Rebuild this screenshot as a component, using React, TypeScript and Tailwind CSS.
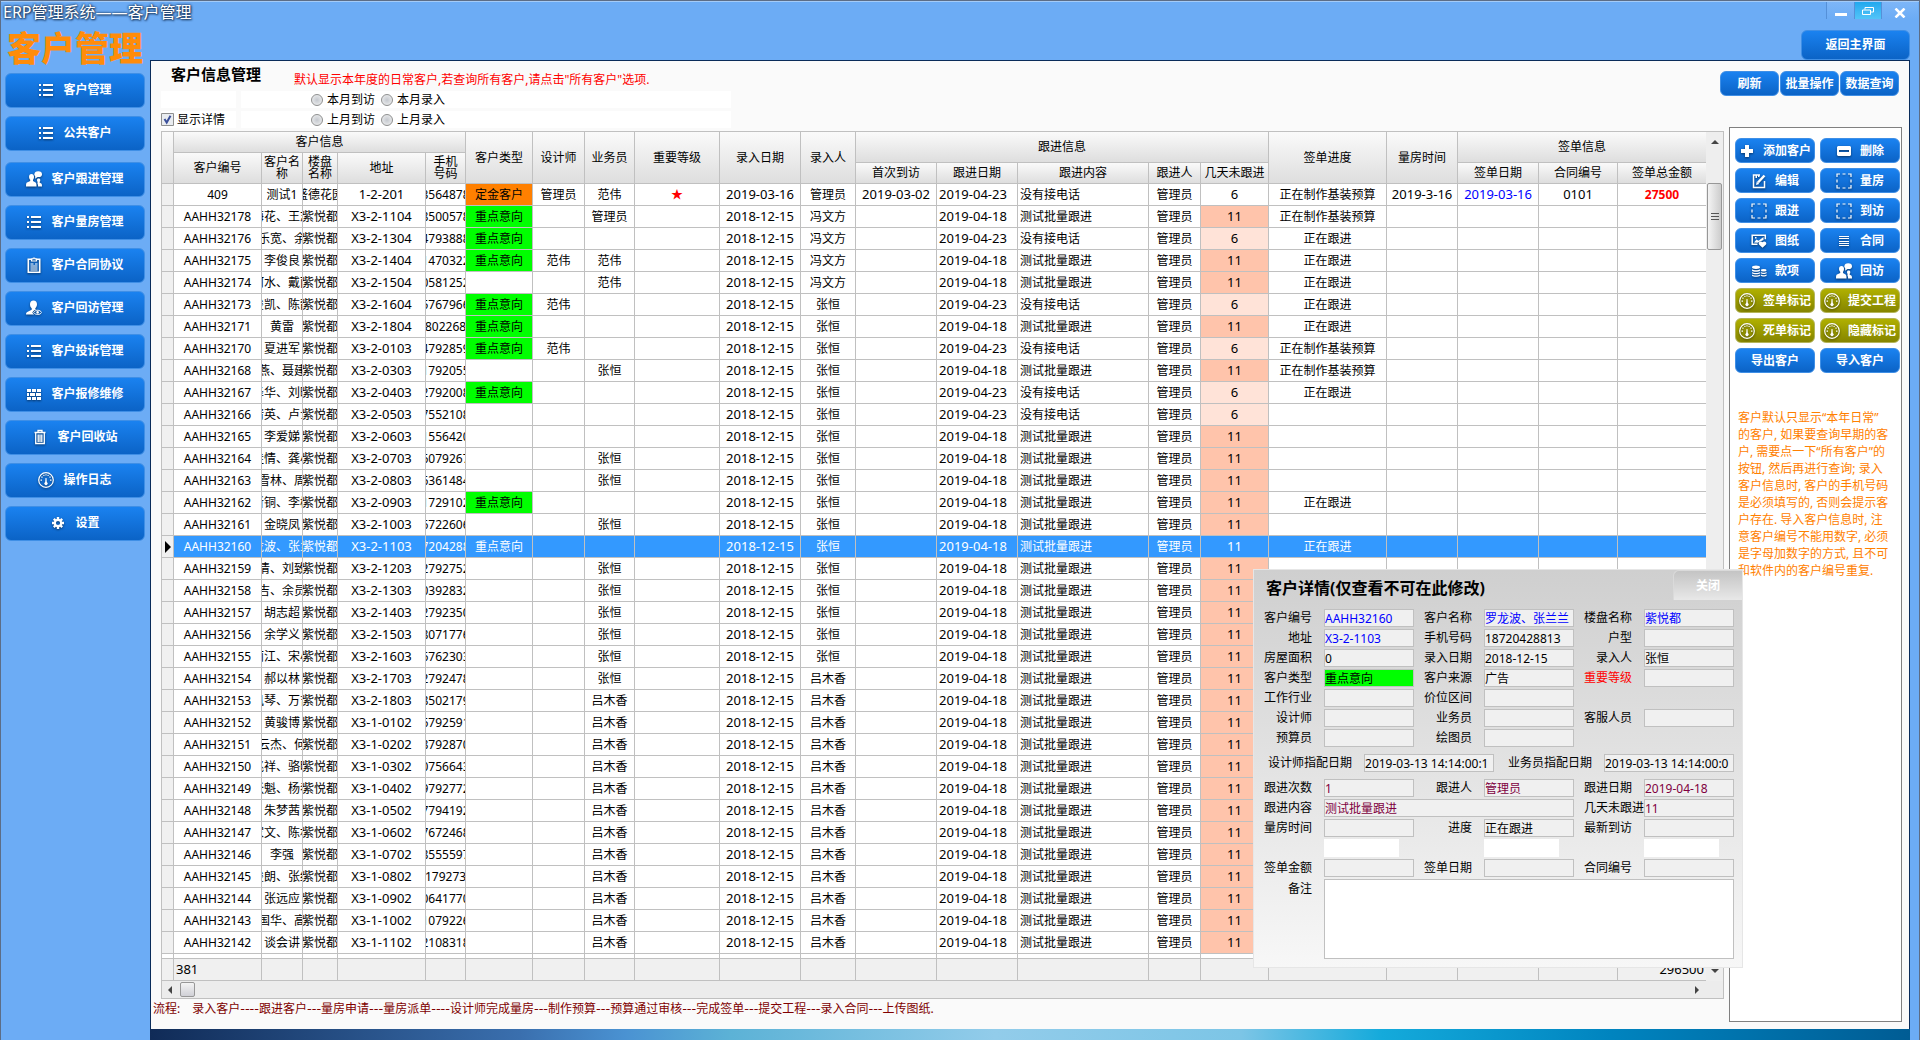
import type { ReactNode } from "react";

type IconName =
  | "list"
  | "people"
  | "clipboard"
  | "userEye"
  | "bricks"
  | "trash"
  | "gauge"
  | "gear"
  | "plus"
  | "minus"
  | "edit"
  | "dashed"
  | "image"
  | "lines"
  | "coins";

const icons: Record<IconName, ReactNode> = {
  list: (
    <path
      fill="currentColor"
      d="M1 2h2v2H1zM5 2h10v2H5zM1 7h2v2H1zM5 7h10v2H5zM1 12h2v2H1zM5 12h10v2H5z"
    />
  ),
  people: (
    <g fill="currentColor">
      <path d="M5.500 3C3.800 3 3 4.200 3 5.800c0 1.300.500 2.300 1.200 2.900v1.400L1 11.600C.400 12 0 12.600 0 15.500h10.500c0-2.900-.400-3.500-1-3.900L7 10.100V8.700C7.600 8.100 8 7.100 8 5.800 8 4.200 7.200 3 5.500 3z" />
      <ellipse cx="12.200" cy="3.200" rx="3.800" ry="2.900" />
      <path d="M9.500 4.500 9 7.800l3-2zM12.500 7.500c-1 0-1.500.700-1.500 1.700 0 .800.300 1.400.700 1.700v.700c-.500.200-.500.500-.200.900.500.800.600 2 .6 3H16c0-2.200-.300-2.800-.800-3.100l-1.600-.9v-.600c.400-.300.700-.900.700-1.700 0-1-.600-1.700-1.800-1.700z" />
    </g>
  ),
  clipboard: (
    <g fill="none" stroke="currentColor">
      <path strokeWidth="1.600" d="M5 2.300H2.300v13h11.400v-13H11" />
      <path strokeWidth="1.200" d="M5.500 4V1.800h1.400C7 .900 9 .900 9.100 1.800h1.400V4zM4.500 7h3M9 7h2.500M4.500 9h7M4.500 11h7M4.500 13h7" />
    </g>
  ),
  userEye: (
    <g fill="currentColor">
      <path d="M7.500.500C5.300.500 4 2.100 4 4.300c0 1.800.700 3.200 1.700 4v1.500l-4 2C.500 12.400 0 13.200 0 14.500h8c-1-1-1.500-1.700-1.700-2 .900-1.700 2.300-2.800 4.200-3.100l-1.200-.500v-.700c1-.800 1.700-2.200 1.700-3.900 0-2.200-1.300-3.800-3.500-3.800z" />
      <path fill="none" stroke="currentColor" d="M7.600 12.500c2-3 6.200-3 8.100 0-1.900 2.700-6.100 2.700-8.100 0z" />
      <circle cx="11.600" cy="12.400" r="1.300" />
    </g>
  ),
  bricks: (
    <path
      fill="currentColor"
      d="M1 3h4v3H1zM6 3h4v3H6zM11 3h4v3h-4zM1 7h2v3H1zM4 7h5v3H4zM10 7h5v3h-5zM1 11h4v3H1zM6 11h4v3H6zM11 11h4v3h-4z"
    />
  ),
  trash: (
    <g fill="none" stroke="currentColor" strokeWidth="1.300">
      <path d="M2.500 3.500h11M6 3.300V1.500h4v1.800M3.700 3.500v11h8.600v-11M6.200 5.500v7.500M8 5.500v7.500M9.800 5.500v7.500" />
    </g>
  ),
  gauge: (
    <g>
      <circle cx="8" cy="8" r="7.300" fill="none" stroke="currentColor" strokeWidth="1.200" />
      <path
        fill="currentColor"
        d="M2.500 7.500h1.500v1.200H2.500zM3.300 4.500h1.300v1.300H3.300zM5.300 2.800h1.200v1.200H5.300zM7.400 2.200h1.200v1.300H7.400zM9.500 2.800h1.200v1.200H9.500zM11.400 4.500h1.300v1.300h-1.300zM12 7.500h1.500v1.200H12z"
      />
      <path fill="currentColor" d="M7.500 6h1l.300 4a1.700 1.700 0 1 1-1.600 0z" />
    </g>
  ),
  gear: (
    <g fill="none" stroke="currentColor">
      <circle cx="8" cy="8" r="3.200" strokeWidth="2.200" />
      <path
        strokeWidth="2.400"
        d="M8 2v2.200M8 11.800V14M2 8h2.200M11.800 8H14M3.800 3.800l1.500 1.500M10.700 10.700l1.500 1.500M3.800 12.200l1.500-1.500M10.700 5.300l1.500-1.500"
      />
    </g>
  ),
  plus: <path fill="currentColor" d="M6 2h4v4h4v4h-4v4H6v-4H2V6h4z" />,
  minus: (
    <path fill="currentColor" fillRule="evenodd" d="M2 3h12l1 1v8l-1 1H2l-1-1V4zM3 7v2h10V7z" />
  ),
  edit: (
    <g fill="none" stroke="currentColor">
      <path strokeWidth="1.500" d="M9 2H2.500v12.500h11V8" />
      <path strokeWidth="2.500" d="M13.500 2.500 7 9.500" />
      <path fill="currentColor" stroke="none" d="m5 12 .8-3.500L8.300 11zM4.500 2h1.500v3H4.500zM7 2h1.500v2H7z" />
    </g>
  ),
  dashed: (
    <path
      fill="none"
      stroke="currentColor"
      strokeWidth="1.200"
      d="M1 4V1h3M6.500 1h3M12 1h3v3M15 6.500v3M15 12v3h-3M9.500 15h-3M4 15H1v-3M1 9.500v-3"
    />
  ),
  image: (
    <g>
      <path fill="none" stroke="currentColor" strokeWidth="1.500" d="M6.500 11.300H1.200V2.200h13.100v4" />
      <path fill="currentColor" d="m3 9.500 2.500-3 2 1.200L12.500 4v3L9 8.500 6.500 9.800zM4 4h1.500v1.500H4z" />
      <path fill="currentColor" d="M11.500 14.700 8 11.500C6.800 9.500 9.500 7.300 11.500 9.200c2-1.900 4.700.300 3.500 2.300z" />
    </g>
  ),
  lines: <path fill="currentColor" d="M3 3h10v1H3zM3 5h10v1H3zM3 8h10v1H3zM3 10h10v1H3zM3 12h10v1H3z" />,
  coins: (
    <g fill="currentColor">
      <ellipse cx="5" cy="4.200" rx="4" ry="1.700" />
      <path d="M1 6.200c1.500 1.300 6.500 1.300 8 0v1.500c-1.500 1.300-6.500 1.300-8 0zM1 8.900c1.500 1.300 6.500 1.300 8 0v1.300c-1.500 1.300-6.500 1.300-8 0zM1 11.500c1.500 1.300 6.500 1.300 8 0v1.300c-1.500 1.300-6.500 1.300-8 0z" />
      <ellipse cx="12.700" cy="7.200" rx="2.900" ry="1.200" />
      <path d="M9.800 9c1.200.9 4.600.9 5.800 0v1.200c-1.200.9-4.600.9-5.800 0zM9.800 11.500c1.200.9 4.600.9 5.800 0v1.300c-1.200.9-4.600.9-5.800 0z" />
    </g>
  ),
};

function Icon({ name }: { name: IconName }) {
  return (
    <svg viewBox="0 0 16 16" className="h-4 w-4 shrink-0 drop-shadow-[0_1px_1px_rgba(0,0,0,0.5)]" aria-hidden="true">
      {icons[name]}
    </svg>
  );
}

const blueBtn =
  "flex items-center justify-center rounded-md border border-[#3f8fe6] bg-linear-to-b from-[#1a82f0] to-[#0b63c6] text-xs font-bold text-white whitespace-nowrap";
const oliveBtn =
  "flex items-center justify-center rounded-md border border-[#b4b45a] bg-linear-to-b from-[#b0b000] to-[#858500] text-xs font-bold text-white whitespace-nowrap";

const menu: { label: string; icon: IconName }[] = [
  { label: "客户管理", icon: "list" },
  { label: "公共客户", icon: "list" },
  { label: "客户跟进管理", icon: "people" },
  { label: "客户量房管理", icon: "list" },
  { label: "客户合同协议", icon: "clipboard" },
  { label: "客户回访管理", icon: "userEye" },
  { label: "客户投诉管理", icon: "list" },
  { label: "客户报修维修", icon: "bricks" },
  { label: "客户回收站", icon: "trash" },
  { label: "操作日志", icon: "gauge" },
  { label: "设置", icon: "gear" },
];

const actions: { label: string; icon?: IconName; olive?: boolean }[] = [
  { label: "添加客户", icon: "plus" },
  { label: "删除", icon: "minus" },
  { label: "编辑", icon: "edit" },
  { label: "量房", icon: "dashed" },
  { label: "跟进", icon: "dashed" },
  { label: "到访", icon: "dashed" },
  { label: "图纸", icon: "image" },
  { label: "合同", icon: "lines" },
  { label: "款项", icon: "coins" },
  { label: "回访", icon: "people" },
  { label: "签单标记", icon: "gauge", olive: true },
  { label: "提交工程", icon: "gauge", olive: true },
  { label: "死单标记", icon: "gauge", olive: true },
  { label: "隐藏标记", icon: "gauge", olive: true },
  { label: "导出客户" },
  { label: "导入客户" },
];

const notes = [
  "客户默认只显示“本年日常”",
  "的客户, 如果要查询早期的客",
  "户, 需要点一下“所有客户”的",
  "按钮, 然后再进行查询; 录入",
  "客户信息时, 客户的手机号码",
  "是必须填写的, 否则会提示客",
  "户存在. 导入客户信息时, 注",
  "意客户编号不能用数字, 必须",
  "是字母加数字的方式, 且不可",
  "和软件内的客户编号重复.",
];

// each step with the dashes that lead to the next one
const steps: [string, string][] = [
  ["录入客户", "----"],
  ["跟进客户", "---"],
  ["量房申请", "---"],
  ["量房派单", "----"],
  ["设计师完成量房", "---"],
  ["制作预算", "---"],
  ["预算通过审核", "---"],
  ["完成签单", "---"],
  ["提交工程", "---"],
  ["录入合同", "---"],
  ["上传图纸.", ""],
];

type Row = {
  id: string;
  name: string;
  estate?: string;
  addr: string;
  phone: string;
  type?: string;
  designer?: string;
  sales?: string;
  star?: boolean;
  entered?: string;
  by: string;
  firstVisit?: string;
  days: 6 | 11;
  progress?: string;
  measured?: string;
  signed?: string;
  contract?: string;
  amount?: string;
};

const KEY = "重点意向";
const FOLLOW = "正在跟进";
const BUDGET = "正在制作基装预算";

const rows: Row[] = [
  {
    id: "409",
    name: "测试1",
    estate: "盛德花园",
    addr: "1-2-201",
    phone: "13356487801",
    type: "定金客户",
    designer: "管理员",
    sales: "范伟",
    star: true,
    entered: "2019-03-16",
    by: "管理员",
    firstVisit: "2019-03-02",
    days: 6,
    progress: BUDGET,
    measured: "2019-3-16",
    signed: "2019-03-16",
    contract: "0101",
    amount: "27500",
  },
  { id: "AAHH32178", name: "陈梅花、王志强", addr: "X3-2-1104", phone: "13850057821", type: KEY, sales: "管理员", by: "冯文方", days: 11, progress: BUDGET },
  { id: "AAHH32176", name: "李乐宽、余平", addr: "X3-2-1304", phone: "13479388812", type: KEY, by: "冯文方", days: 6, progress: FOLLOW },
  { id: "AAHH32175", name: "李俊良", addr: "X3-2-1404", phone: "15147032215", type: KEY, designer: "范伟", sales: "范伟", by: "冯文方", days: 11, progress: FOLLOW },
  { id: "AAHH32174", name: "周河水、戴丽华", addr: "X3-2-1504", phone: "13058125233", sales: "范伟", by: "冯文方", days: 11, progress: FOLLOW },
  { id: "AAHH32173", name: "张俊凯、陈静文", addr: "X3-2-1604", phone: "13576796616", type: KEY, designer: "范伟", by: "张恒", days: 6, progress: FOLLOW },
  { id: "AAHH32171", name: "黄雷", addr: "X3-2-1804", phone: "1380226801", type: KEY, by: "张恒", days: 11, progress: FOLLOW },
  { id: "AAHH32170", name: "夏进军", addr: "X3-2-0103", phone: "13479285912", type: KEY, designer: "范伟", by: "张恒", days: 6, progress: BUDGET },
  { id: "AAHH32168", name: "王燕、聂建国", addr: "X3-2-0303", phone: "15179205516", sales: "张恒", by: "张恒", days: 11, progress: BUDGET },
  { id: "AAHH32167", name: "李泽华、刘晓明", addr: "X3-2-0403", phone: "18279200810", type: KEY, by: "张恒", days: 6, progress: FOLLOW },
  { id: "AAHH32166", name: "陈倩英、卢士元", addr: "X3-2-0503", phone: "13755210812", by: "张恒", days: 6 },
  { id: "AAHH32165", name: "李爱娣", addr: "X3-2-0603", phone: "15155642011", by: "张恒", days: 11 },
  { id: "AAHH32164", name: "李佳情、龚小平", addr: "X3-2-0703", phone: "13607926712", sales: "张恒", by: "张恒", days: 11 },
  { id: "AAHH32163", name: "王雪林、周杰", addr: "X3-2-0803", phone: "13636148412", sales: "张恒", by: "张恒", days: 11 },
  { id: "AAHH32162", name: "王新铜、李梅花", addr: "X3-2-0903", phone: "15172910212", type: KEY, by: "张恒", days: 11, progress: FOLLOW },
  { id: "AAHH32161", name: "金晓凤", addr: "X3-2-1003", phone: "13672260612", sales: "张恒", by: "张恒", days: 11 },
  { id: "AAHH32160", name: "罗龙波、张兰兰", addr: "X3-2-1103", phone: "18720428813", type: KEY, by: "张恒", days: 11, progress: FOLLOW },
  { id: "AAHH32159", name: "王清、刘致远", addr: "X3-2-1203", phone: "18279275212", sales: "张恒", by: "张恒", days: 11 },
  { id: "AAHH32158", name: "李吉、余员生", addr: "X3-2-1303", phone: "13039283212", sales: "张恒", by: "张恒", days: 11 },
  { id: "AAHH32157", name: "胡志超", addr: "X3-2-1403", phone: "18279235012", sales: "张恒", by: "张恒", days: 11 },
  { id: "AAHH32156", name: "余学义", addr: "X3-2-1503", phone: "13807177612", sales: "张恒", by: "张恒", days: 11 },
  { id: "AAHH32155", name: "王丽江、宋小明", addr: "X3-2-1603", phone: "13676230312", sales: "张恒", by: "张恒", days: 11 },
  { id: "AAHH32154", name: "郝以林", addr: "X3-2-1703", phone: "18279247812", sales: "张恒", by: "吕木香", days: 11 },
  { id: "AAHH32153", name: "李凤琴、万吉平", addr: "X3-2-1803", phone: "13850217912", sales: "吕木香", by: "吕木香", days: 11 },
  { id: "AAHH32152", name: "黄骏博", addr: "X3-1-0102", phone: "13679259112", sales: "吕木香", by: "吕木香", days: 11 },
  { id: "AAHH32151", name: "张云杰、何平", addr: "X3-1-0202", phone: "13879287012", sales: "吕木香", by: "吕木香", days: 11 },
  { id: "AAHH32150", name: "李兆祥、骆明华", addr: "X3-1-0302", phone: "13075664312", sales: "吕木香", by: "吕木香", days: 11 },
  { id: "AAHH32149", name: "李跃魁、杨春梅", addr: "X3-1-0402", phone: "13979277212", sales: "吕木香", by: "吕木香", days: 11 },
  { id: "AAHH32148", name: "朱梦茜", addr: "X3-1-0502", phone: "13779419212", sales: "吕木香", by: "吕木香", days: 11 },
  { id: "AAHH32147", name: "李家文、陈林英", addr: "X3-1-0602", phone: "13767246812", sales: "吕木香", by: "吕木香", days: 11 },
  { id: "AAHH32146", name: "李强", addr: "X3-1-0702", phone: "13855559712", sales: "吕木香", by: "吕木香", days: 11 },
  { id: "AAHH32145", name: "王俊朗、张红梅", addr: "X3-1-0802", phone: "1317927312", sales: "吕木香", by: "吕木香", days: 11 },
  { id: "AAHH32144", name: "张远应", addr: "X3-1-0902", phone: "13064177012", sales: "吕木香", by: "吕木香", days: 11 },
  { id: "AAHH32143", name: "李国华、高平", addr: "X3-1-1002", phone: "15107922612", sales: "吕木香", by: "吕木香", days: 11 },
  { id: "AAHH32142", name: "谈会讲", addr: "X3-1-1102", phone: "13210831812", sales: "吕木香", by: "吕木香", days: 11 },
];

function Th({ children, rowSpan, colSpan, last }: { children?: ReactNode; rowSpan?: number; colSpan?: number; last?: boolean }) {
  return (
    <th
      rowSpan={rowSpan}
      colSpan={colSpan}
      className={`border-b border-[#c0c0c0] bg-linear-to-b from-[#fafafa] to-[#dedede] p-0 font-normal leading-3 ${
        last ? "" : "border-r"
      }`}
    >
      {children}
    </th>
  );
}

function Td({ children, className = "", last }: { children?: ReactNode; className?: string; last?: boolean }) {
  return (
    <td
      className={`h-[22px] overflow-hidden border-b border-[#c0c0c0] p-0 leading-[21px] whitespace-nowrap ${
        last ? "" : "border-r"
      } ${className}`}
    >
      {children}
    </td>
  );
}

// wide values stay centred and get cut on both sides
function Clipped({ children }: { children: ReactNode }) {
  return <div className="flex h-[21px] justify-center overflow-hidden">{children}</div>;
}

function DataRow({ row }: { row: Row }) {
  const selected = row.id === "AAHH32160";
  const typeColor = selected || !row.type ? "" : row.type === KEY ? "bg-[#00ff00]" : "bg-[#ff8000]";
  const dayColor = selected || row.id === "409" ? "" : row.days === 11 ? "bg-[#ffc4ab]" : "bg-[#ffe3d8]";
  return (
    <tr className={selected ? "bg-[#3399ff] text-center text-white" : "bg-white text-center"}>
      <Td className="bg-[#f0f0f0]">
        {selected && (
          <svg viewBox="0 0 6 12" className="mx-auto h-3 w-[6px] text-black" aria-hidden="true">
            <path fill="currentColor" d="M0 0l6 6-6 6z" />
          </svg>
        )}
      </Td>
      <Td>{row.id}</Td>
      <Td>
        <Clipped>{row.name}</Clipped>
      </Td>
      <Td>
        <Clipped>{row.estate ?? "紫悦都"}</Clipped>
      </Td>
      <Td className="text-[13px]">{row.addr}</Td>
      <Td>
        <Clipped>{row.phone}</Clipped>
      </Td>
      <Td className={typeColor}>{row.type}</Td>
      <Td>{row.designer}</Td>
      <Td>{row.sales}</Td>
      <Td className="text-[#ff0000]">{row.star && "★"}</Td>
      <Td className="text-[13px]">{row.entered ?? "2018-12-15"}</Td>
      <Td>{row.by}</Td>
      <Td className="text-[13px]">{row.firstVisit}</Td>
      <Td className="pl-[2px]! text-left text-[13px]">{row.days === 6 ? "2019-04-23" : "2019-04-18"}</Td>
      <Td className="pl-[2px]! text-left">{row.days === 6 ? "没有接电话" : "测试批量跟进"}</Td>
      <Td>管理员</Td>
      <Td className={`text-[13px] ${dayColor}`}>{row.days}</Td>
      <Td>{row.progress}</Td>
      <Td className="text-[13px]">{row.measured}</Td>
      <Td className="text-[13px] text-[#0000ff]">{row.signed}</Td>
      <Td className="text-[13px]">{row.contract}</Td>
      <Td last className="font-bold text-[#ff0000]">
        {row.amount}
      </Td>
    </tr>
  );
}

function CustomerTable() {
  return (
    <table className="w-full min-w-0 flex-1 table-fixed border-separate border-spacing-0">
      <colgroup>
        <col className="w-[12px]" />
        <col className="w-[88px]" />
        <col className="w-[41px]" />
        <col className="w-[35px]" />
        <col className="w-[88px]" />
        <col className="w-[40px]" />
        <col className="w-[67px]" />
        <col className="w-[52px]" />
        <col className="w-[50px]" />
        <col className="w-[85px]" />
        <col className="w-[81px]" />
        <col className="w-[55px]" />
        <col className="w-[81px]" />
        <col className="w-[81px]" />
        <col className="w-[131px]" />
        <col className="w-[52px]" />
        <col className="w-[68px]" />
        <col className="w-[118px]" />
        <col className="w-[71px]" />
        <col className="w-[81px]" />
        <col className="w-[79px]" />
        <col />
      </colgroup>
      <thead>
        <tr className="h-[21px]">
          <Th rowSpan={3} />
          <Th colSpan={5}>客户信息</Th>
          <Th rowSpan={3}>客户类型</Th>
          <Th rowSpan={3}>设计师</Th>
          <Th rowSpan={3}>业务员</Th>
          <Th rowSpan={3}>重要等级</Th>
          <Th rowSpan={3}>录入日期</Th>
          <Th rowSpan={3}>录入人</Th>
          <Th rowSpan={2} colSpan={5}>
            跟进信息
          </Th>
          <Th rowSpan={3}>签单进度</Th>
          <Th rowSpan={3}>量房时间</Th>
          <Th rowSpan={2} colSpan={3} last>
            签单信息
          </Th>
        </tr>
        <tr className="h-[10px]">
          <Th rowSpan={2}>客户编号</Th>
          <Th rowSpan={2}>
            客户名
            <br />称
          </Th>
          <Th rowSpan={2}>
            楼盘
            <br />
            名称
          </Th>
          <Th rowSpan={2}>地址</Th>
          <Th rowSpan={2}>
            手机
            <br />
            号码
          </Th>
        </tr>
        <tr className="h-[21px]">
          <Th>首次到访</Th>
          <Th>跟进日期</Th>
          <Th>跟进内容</Th>
          <Th>跟进人</Th>
          <Th>几天未跟进</Th>
          <Th>签单日期</Th>
          <Th>合同编号</Th>
          <Th last>签单总金额</Th>
        </tr>
      </thead>
      <tbody>
        {rows.map((r) => (
          <DataRow key={r.id} row={r} />
        ))}
        <tr className="bg-white">
          {Array.from({ length: 22 }, (_, i) => (
            <td key={i} className={`h-[5px] border-b border-[#c0c0c0] p-0 ${i === 21 ? "" : "border-r"}`} />
          ))}
        </tr>
      </tbody>
      <tfoot>
        <tr className="bg-[#f0f0f0]">
          <Td />
          <Td className="pl-[2px]! text-left text-[13px]">381</Td>
          {Array.from({ length: 19 }, (_, i) => (
            <Td key={i} />
          ))}
          <Td last className="pr-[2px]! text-right text-[13px]">
            296500
          </Td>
        </tr>
      </tfoot>
    </table>
  );
}

function Arrow({ d }: { d: string }) {
  return (
    <svg viewBox="0 0 8 8" className="h-2 w-2 text-[#444]" aria-hidden="true">
      <path fill="currentColor" d={d} />
    </svg>
  );
}

type FieldProps = {
  id: string;
  label: string;
  value?: string;
  color?: string;
  labelColor?: string;
  labelPad?: string;
  bg?: string;
  span?: string;
};

function Field({
  id,
  label,
  value = "",
  color = "text-black",
  labelColor = "",
  labelPad = "pr-3",
  bg = "bg-[#f0f0f0]",
  span = "",
}: FieldProps) {
  return (
    <div className={`flex items-center ${span}`}>
      <label htmlFor={id} className={`w-[60px] shrink-0 text-right whitespace-nowrap ${labelPad} ${labelColor}`}>
        {label}
      </label>
      <input
        id={id}
        readOnly
        value={value}
        className={`h-[18px] w-full min-w-0 border border-[#c0c0c0] px-0 leading-4 outline-none ${bg} ${color}`}
      />
    </div>
  );
}

function WideField({ id, label, value }: { id: string; label: string; value: string }) {
  return (
    <div className="flex items-center">
      <label htmlFor={id} className="mr-3 whitespace-nowrap">
        {label}
      </label>
      <input
        id={id}
        readOnly
        value={value}
        className="h-[18px] w-[130px] border border-[#c0c0c0] bg-[#f0f0f0] px-0 leading-4 outline-none"
      />
    </div>
  );
}

function DetailPopup() {
  const blue = "text-[#0000ff]";
  const wine = "text-[#800040]";
  return (
    <section
      aria-label="客户详情"
      className="absolute top-[437px] -right-5 z-10 w-[490px] border border-[#e6e6e6] bg-linear-to-b from-[#cfcfcf] to-[#f7f7f7] pb-2"
    >
      <div className="flex justify-between">
        <h3 className="pt-[6px] pl-3 text-base leading-6 font-bold">客户详情(仅查看不可在此修改)</h3>
        <button
          type="button"
          className="h-[30px] w-[69px] rounded-tl-md border-t border-l border-[#dadada] bg-linear-to-b from-[#c4c4c4] to-[#e8e8e8] text-xs font-bold text-white"
        >
          关闭
        </button>
      </div>

      <div className="mt-[9px] grid grid-cols-3 gap-x-[10px] gap-y-[2px] pr-2 pl-[10px]">
        <Field id="d-id" label="客户编号" value="AAHH32160" color={blue} />
        <Field id="d-name" label="客户名称" value="罗龙波、张兰兰" color={blue} />
        <Field id="d-estate" label="楼盘名称" value="紫悦都" color={blue} />
        <Field id="d-addr" label="地址" value="X3-2-1103" color={blue} />
        <Field id="d-phone" label="手机号码" value="18720428813" />
        <Field id="d-layout" label="户型" />
        <Field id="d-area" label="房屋面积" value="0" />
        <Field id="d-entered" label="录入日期" value="2018-12-15" />
        <Field id="d-by" label="录入人" value="张恒" />
        <Field id="d-type" label="客户类型" value="重点意向" bg="bg-[#00ff00]" />
        <Field id="d-source" label="客户来源" value="广告" />
        <Field id="d-level" label="重要等级" labelColor="text-[#ff0000]" />
        <Field id="d-job" label="工作行业" />
        <Field id="d-price" label="价位区间" />
        <div />
        <Field id="d-designer" label="设计师" />
        <Field id="d-sales" label="业务员" />
        <Field id="d-service" label="客服人员" />
        <Field id="d-budget" label="预算员" />
        <Field id="d-draw" label="绘图员" />
      </div>

      <div className="mt-[7px] flex justify-between pr-2 pl-[14px]">
        <WideField id="d-assign1" label="设计师指配日期" value="2019-03-13 14:14:00:1" />
        <WideField id="d-assign2" label="业务员指配日期" value="2019-03-13 14:14:00:0" />
      </div>

      <div className="mt-[7px] grid grid-cols-3 gap-x-[10px] gap-y-[2px] pr-2 pl-[10px]">
        <Field id="d-times" label="跟进次数" value="1" color={wine} />
        <Field id="d-follower" label="跟进人" value="管理员" color={wine} />
        <Field id="d-date" label="跟进日期" value="2019-04-18" color={wine} />
        <Field id="d-content" label="跟进内容" value="测试批量跟进" color={wine} span="col-span-2" />
        <Field id="d-days" label="几天未跟进" labelPad="" value="11" color={wine} />
        <Field id="d-measure" label="量房时间" />
        <Field id="d-progress" label="进度" value="正在跟进" />
        <Field id="d-visit" label="最新到访" />
        <div className="ml-[60px] h-[18px] w-[75px] bg-white" />
        <div className="ml-[60px] h-[18px] w-[75px] bg-white" />
        <div className="ml-[60px] h-[18px] w-[75px] bg-white" />
        <Field id="d-amount" label="签单金额" />
        <Field id="d-signed" label="签单日期" />
        <Field id="d-contract" label="合同编号" />
        <div className="col-span-3 flex">
          <label htmlFor="d-remark" className="w-[60px] shrink-0 pr-3 text-right leading-5">
            备注
          </label>
          <textarea
            id="d-remark"
            readOnly
            className="block h-20 w-full resize-none border border-[#c0c0c0] bg-white outline-none"
          />
        </div>
      </div>
    </section>
  );
}

function Radio({ label }: { label: string }) {
  return (
    <label className="flex items-center gap-1">
      <input
        type="radio"
        name="range"
        className="h-3 w-3 appearance-none rounded-full border border-[#8e8f8f] bg-radial from-[#c4c8ce] to-[#f4f4f4]"
      />
      {label}
    </label>
  );
}

export default function App() {
  return (
    <div className="flex min-h-screen w-full flex-col border-x border-t border-[#5c6d86] bg-[#6cacf5] font-['Noto_Sans','Noto_Sans_CJK_SC',sans-serif] text-xs text-black">
      {/* title bar */}
      <header className="flex h-[27px] items-start justify-between border-t border-[#a3cbf8]">
        <h1 className="pl-[2px] text-base leading-5 whitespace-nowrap text-white [text-shadow:0_0_2px_#1d3c63,1px_1px_2px_#1d3c63,0_0_3px_#1d3c63]">
          ERP管理系统——客户管理
        </h1>
        <div className="flex h-[17px] pr-px">
          <button
            type="button"
            aria-label="最小化"
            className="flex w-7 items-center justify-center border-l border-[#5590d8] bg-linear-to-b from-[#7db6f8] to-[#6cacf5] pt-2"
          >
            <span className="h-[3px] w-3 bg-white" />
          </button>
          <button
            type="button"
            aria-label="还原"
            className="flex w-7 items-center justify-center border-x border-[#5590d8] bg-linear-to-b from-[#1fa8ee] to-[#52c4f8]"
          >
            <svg viewBox="0 0 12 8" className="h-2 w-3 text-white" aria-hidden="true">
              <path fill="none" stroke="currentColor" d="M.5 3h8v4.500h-8zM3 2.500v-2h8.500v4.500H9" />
            </svg>
          </button>
          <button
            type="button"
            aria-label="关闭窗口"
            className="flex w-9 items-center justify-center bg-linear-to-b from-[#7db6f8] to-[#6cacf5] pt-1"
          >
            <svg viewBox="0 0 12 10" className="h-[10px] w-3 text-white" aria-hidden="true">
              <path fill="none" stroke="currentColor" strokeWidth="2.500" d="M1.500.500l9 9M10.500.500l-9 9" />
            </svg>
          </button>
        </div>
      </header>

      <div className="flex flex-1">
        <nav className="w-[149px] shrink-0 pl-1">
          <h2 className="h-[45px] pl-[2px] text-[34px] leading-[40px] font-black whitespace-nowrap text-[#ff8c0a]">客户管理</h2>
          <ul className="flex flex-col gap-2">
            {menu.map((m) => (
              <li key={m.label} className={m.label === "客户跟进管理" ? "mt-[3px]" : ""}>
                <button type="button" className={`${blueBtn} h-[35px] w-[140px] gap-[9px] pb-[2px]`}>
                  <Icon name={m.icon} />
                  {m.label}
                </button>
              </li>
            ))}
          </ul>
        </nav>

        <main className="mr-[9px] flex min-w-0 flex-1 flex-col">
          <div className="flex h-8 items-end justify-end">
            <button type="button" className={`${blueBtn} h-[30px] w-[109px]`}>
              返回主界面
            </button>
          </div>

          <div className="flex flex-1 flex-col border-t border-r border-l border-[#0a2c5a] bg-[#fafafa]">
            <div className="flex h-[66px] justify-between">
              <div className="ml-[10px]">
                <div className="flex h-[30px]">
                  <h2 className="w-[133px] pl-[10px] text-[15px] leading-[27px] font-bold">客户信息管理</h2>
                  <p className="leading-[38px] text-[#ff0000]">
                    默认显示本年度的日常客户,若查询所有客户,请点击"所有客户"选项.
                  </p>
                </div>
                <div className="flex flex-col gap-[3px]">
                  <div className="flex h-[17px] gap-[5px]">
                    <div className="w-[75px] bg-white" />
                    <div className="flex w-[490px] items-center gap-[6px] bg-white pl-[70px]">
                      <Radio label="本月到访" />
                      <Radio label="本月录入" />
                    </div>
                  </div>
                  <div className="flex h-[17px] gap-[5px]">
                    <label className="flex w-[75px] items-center gap-[3px] bg-white">
                      <input type="checkbox" defaultChecked className="peer sr-only" />
                      <svg viewBox="0 0 13 13" className="h-[13px] w-[13px]" aria-hidden="true">
                        <path fill="#e9ecf0" stroke="#8e8f8f" d="M.5.500h12v12H.500z" />
                        <path fill="none" stroke="#3a4f9a" strokeWidth="2" d="M3.500 6l2.200 3.500L9.500 2.800" />
                      </svg>
                      显示详情
                    </label>
                    <div className="flex w-[490px] items-center gap-[6px] bg-white pl-[70px]">
                      <Radio label="上月到访" />
                      <Radio label="上月录入" />
                    </div>
                  </div>
                </div>
              </div>
              <div className="mt-[10px] mr-[10px] flex h-[25px] gap-px">
                <button type="button" className={`${blueBtn} w-[59px]`}>
                  刷新
                </button>
                <button type="button" className={`${blueBtn} w-[59px]`}>
                  批量操作
                </button>
                <button type="button" className={`${blueBtn} w-[59px]`}>
                  数据查询
                </button>
              </div>
            </div>

            <div className="flex flex-1">
              <div className="mr-[5px] min-w-0 flex-1">
                <div className="relative mt-1 ml-[10px] border border-[#c0c0c0]">
                  <div className="flex">
                    <CustomerTable />
                    <div className="flex w-[17px] shrink-0 flex-col items-center bg-[#eeeeee]">
                      <div className="flex h-[51px] items-start pt-[6px]">
                        <Arrow d="M0 6l4-4 4 4z" />
                      </div>
                      <div className="flex h-[67px] w-[15px] flex-col items-center justify-center gap-[2px] rounded-xs border border-[#979797] bg-linear-to-r from-[#f4f4f4] to-[#cdcdcd]">
                        <span className="h-px w-2 bg-[#555]" />
                        <span className="h-px w-2 bg-[#555]" />
                        <span className="h-px w-2 bg-[#555]" />
                      </div>
                      <div className="mt-auto pb-[6px]">
                        <Arrow d="M0 2l4 4 4-4z" />
                      </div>
                    </div>
                  </div>
                  <div className="flex h-[17px] items-center bg-[#ececec] pr-[22px] pl-1">
                    <Arrow d="M6 0L2 4l4 4z" />
                    <div className="ml-[6px] h-[15px] w-[15px] rounded-xs border border-[#979797] bg-linear-to-b from-[#f4f4f4] to-[#d0d0d6]" />
                    <div className="ml-auto">
                      <Arrow d="M2 0l4 4-4 4z" />
                    </div>
                  </div>
                  <DetailPopup />
                </div>
                <p className="flex pl-[2px] leading-[20px] whitespace-nowrap text-[#800000]">
                  <span className="mr-3">流程:</span>
                  {steps.map(([step, dashes]) => (
                    <span key={step}>
                      {step}
                      <span className="font-['DejaVu_Sans',sans-serif] text-[13px]">{dashes}</span>
                    </span>
                  ))}
                </p>
              </div>

              <aside className="mr-[7px] mb-[7px] w-[173px] shrink-0 border border-[#808080] bg-white pt-[10px]">
                <div className="grid grid-cols-2 gap-[5px] pr-px pl-[5px]">
                  {actions.map((a) => (
                    <button
                      key={a.label}
                      type="button"
                      className={`${a.olive ? oliveBtn : blueBtn} h-[25px] w-[80px] gap-2`}
                    >
                      {a.icon && <Icon name={a.icon} />}
                      {a.label}
                    </button>
                  ))}
                </div>
                <div className="mt-[36px] pl-2 leading-[17px] text-[#ff8000]">
                  {notes.map((line) => (
                    <p key={line} className="whitespace-nowrap">
                      {line}
                    </p>
                  ))}
                </div>
              </aside>
            </div>
          </div>

          <div className="h-[11px] bg-[linear-gradient(90deg,#102b57_0%,#3a6fae_21%,#4a92d2_27%,#5cb2d6_33%,#92ccea_48%,#7cc5e6_62%,#14aadb_70%,#0084bf_83%,#005c94_100%)]" />
        </main>
      </div>
    </div>
  );
}
